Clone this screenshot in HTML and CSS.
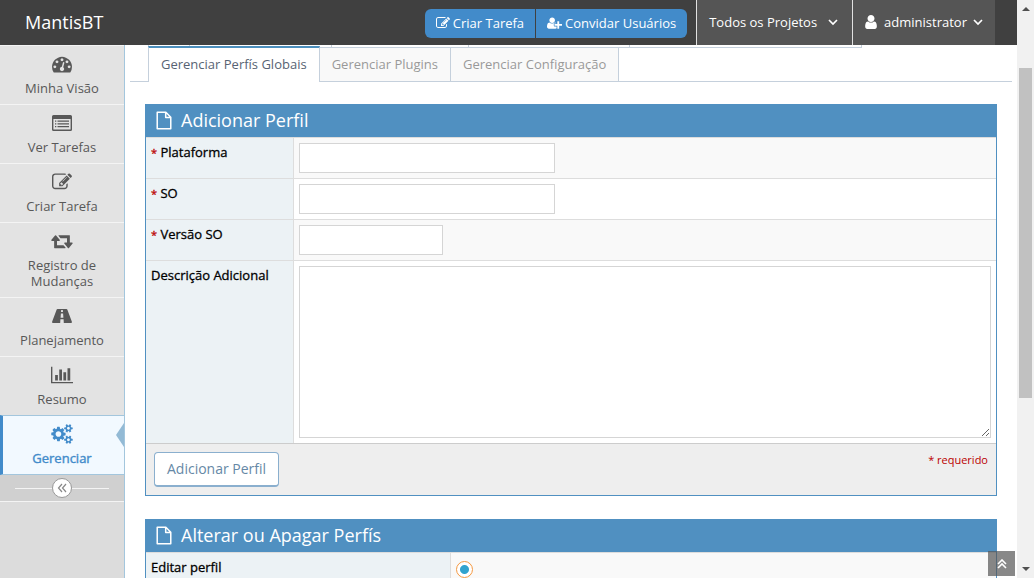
FILE: index.html
```html
<!DOCTYPE html>
<html lang="pt-BR">
<head>
<meta charset="utf-8">
<title>MantisBT</title>
<link rel="stylesheet" href="styles.css">
</head>
<body>
<svg class="sprite" aria-hidden="true">
  <symbol id="i-edit" viewBox="0 0 1792 1792"><path d="M888 1184l116-116-152-152-116 116v56h96v96h56zm440-720q-16-16-33 1l-350 350q-17 17-1 33t33-1l350-350q17-17 1-33zm80 594v190q0 119-84.5 203.5t-203.5 84.5h-832q-119 0-203.5-84.5t-84.5-203.5v-832q0-119 84.5-203.5t203.5-84.5h832q63 0 117 25 15 7 18 23 3 17-9 29l-49 49q-14 14-32 8-23-6-45-6h-832q-66 0-113 47t-47 113v832q0 66 47 113t113 47h832q66 0 113-47t47-113v-126q0-13 9-22l64-64q15-15 35-7t20 29zm-96-738l288 288-672 672h-288v-288zm444 132l-92 92-288-288 92-92q28-28 68-28t68 28l152 152q28 28 28 68t-28 68z"/></symbol>
  <symbol id="i-file" viewBox="0 0 17 20"><path fill="none" stroke="currentColor" stroke-width="1.6" stroke-linejoin="round" d="M1.3 1.3h9.2l5.2 5.2v12.2H1.3zM10.3 1.3v5.4h5.4"/></symbol>
  <symbol id="i-down" viewBox="0 0 10 10"><path fill="none" stroke="currentColor" stroke-width="1.7" d="M1 3l4 4 4-4"/></symbol>
</svg>
<div class="page">
  <div class="app">
    <header class="navbar">
      <a class="brand" href="#">MantisBT</a>
      <div class="actions">
        <a class="action" href="#"><svg class="icon-sm" aria-hidden="true"><use href="#i-edit"/></svg>Criar Tarefa</a>
        <a class="action" href="#"><svg class="icon-wide" viewBox="0 0 2048 1792" aria-hidden="true"><path d="M704 896q-159 0-271.5-112.5t-112.5-271.5 112.5-271.5 271.5-112.5 271.5 112.5 112.5 271.5-112.5 271.5-271.5 112.5zm960 128h352q13 0 22.5 9.5t9.5 22.5v192q0 13-9.5 22.5t-22.5 9.5h-352v352q0 13-9.5 22.5t-22.5 9.5h-192q-13 0-22.5-9.5t-9.5-22.5v-352h-352q-13 0-22.5-9.5t-9.5-22.5v-192q0-13 9.5-22.5t22.5-9.5h352v-352q0-13 9.5-22.5t22.5-9.5h192q13 0 22.5 9.5t9.5 22.5v352zm-736 224q0 52 38 90t90 38h256v238q-68 50-171 50h-874q-121 0-194-69t-73-190q0-53 3.5-103.5t14-109 26.5-108.5 43-97.5 62-81 85.5-53.5 111.5-20q19 0 39 17 79 61 154.5 91.5t164.5 30.5 164.5-30.5 154.5-91.5q20-17 39-17 132 0 217 96h-223q-52 0-90 38t-38 90v192z"/></svg>Convidar Usuários</a>
      </div>
      <button class="menu menu-project" type="button">Todos os Projetos<svg class="caret" aria-hidden="true"><use href="#i-down"/></svg></button>
      <button class="menu menu-user" type="button"><svg class="icon-user" viewBox="192 128 1408 1536" aria-hidden="true"><path d="M1536 1399q0 109-62.5 187t-150.5 78h-854q-88 0-150.5-78t-62.5-187q0-85 8.5-160.5t31.5-152 58.5-131 94-89 134.5-34.5q131 128 313 128t313-128q76 0 134.5 34.5t94 89 58.5 131 31.5 152 8.5 160.5zm-256-887q0 159-112.5 271.5t-271.5 112.5-271.5-112.5-112.5-271.5 112.5-271.5 271.5-112.5 271.5 112.5 112.5 271.5z"/></svg>administrator<svg class="caret" aria-hidden="true"><use href="#i-down"/></svg></button>
    </header>
    <div class="columns">
      <nav class="sidebar">
        <a class="side-link" href="#"><svg class="side-icon" viewBox="0 0 1792 1792" aria-hidden="true"><path d="M384 1152q0-53-37.5-90.5t-90.5-37.5-90.5 37.5-37.5 90.5 37.5 90.5 90.5 37.5 90.5-37.5 37.5-90.5zm192-448q0-53-37.5-90.5t-90.5-37.5-90.5 37.5-37.5 90.5 37.5 90.5 90.5 37.5 90.5-37.5 37.5-90.5zm428 481l101-382q6-26-7.5-48.5t-38.5-29.5-48 6.5-30 39.5l-101 382q-60 5-107 43.5t-63 98.5q-20 77 20 146t117 89 146-20 89-117q16-60-6-117t-72-91zm660-33q0-53-37.5-90.5t-90.5-37.5-90.5 37.5-37.5 90.5 37.5 90.5 90.5 37.5 90.5-37.5 37.5-90.5zm-640-640q0-53-37.5-90.5t-90.5-37.5-90.5 37.5-37.5 90.5 37.5 90.5 90.5 37.5 90.5-37.5 37.5-90.5zm448 192q0-53-37.5-90.5t-90.5-37.5-90.5 37.5-37.5 90.5 37.5 90.5 90.5 37.5 90.5-37.5 37.5-90.5zm320 448q0 261-141 483-19 29-54 29h-1402q-35 0-54-29-141-221-141-483 0-182 71-348t191-286 286-191 348-71 348 71 286 191 191 286 71 348z"/></svg>Minha Visão</a>
        <a class="side-link" href="#"><svg class="side-icon" viewBox="0 0 20 20" aria-hidden="true"><path fill-rule="evenodd" d="M1.500 2h17A1.500 1.500 0 0 1 20 3.500v13a1.500 1.500 0 0 1-1.500 1.500h-17A1.500 1.500 0 0 1 0 16.500v-13A1.500 1.500 0 0 1 1.500 2zM1.400 6v10.200q0 .4.400.4h16.400q.4 0 .4-.4V6zM3 7.400h1.300v1.300H3zM5.500 7.400H17v1.300H5.500zM3 10.200h1.300v1.300H3zM5.500 10.200H17v1.300H5.500zM3 13h1.300v1.300H3zM5.500 13H17v1.300H5.500z"/></svg>Ver Tarefas</a>
        <a class="side-link" href="#"><svg class="side-icon" aria-hidden="true"><use href="#i-edit"/></svg>Criar Tarefa</a>
        <a class="side-link" href="#"><svg class="side-icon" viewBox="-64 0 1920 1792" aria-hidden="true"><path d="M1216 1504q0 13-9.500 22.500t-22.500 9.500h-960q-8 0-13.500-2t-9-7-5.500-8-3-11.500-1-11.500v-600h-192q-26 0-45-19t-19-45q0-24 15-41l320-384q19-22 49-22t49 22l320 384q15 17 15 41 0 26-19 45t-45 19h-192v384h576q16 0 25 11l160 192q7 10 7 21zm640-416q0 24-15 41l-320 384q-20 23-49 23t-49-23l-320-384q-15-17-15-41 0-26 19-45t45-19h192v-384h-576q-16 0-25-12l-160-192q-7-9-7-20 0-13 9.500-22.500t22.500-9.500h960q8 0 13.500 2t9 7 5.500 8 3 11.500 1 11.500v600h192q26 0 45 19t19 45z"/></svg>Registro de Mudanças</a>
        <a class="side-link" href="#"><svg class="side-icon" viewBox="0 0 20 20" aria-hidden="true"><path fill-rule="evenodd" d="M5.500 3h9q.6 0 .8.600l4.600 12.200q.3 1.200-.9 1.200H1q-1.200 0-.9-1.200L4.700 3.600q.2-.6.800-.6zM9.200 3.900L9 6h2l-.2-2.100zM8.900 7.400l-.3 4.300h2.800l-.3-4.300zM8.400 13.300L8.200 17h3.600l-.2-3.700z"/></svg>Planejamento</a>
        <a class="side-link" href="#"><svg class="side-icon" viewBox="0 0 2048 1792" aria-hidden="true"><path d="M640 896v512h-256v-512h256zm384-512v1024h-256v-1024h256zm1024 1152v128h-2048v-1536h128v1408h1920zm-640-896v768h-256v-768h256zm384-384v1152h-256v-1152h256z"/></svg>Resumo</a>
        <a class="side-link side-active" href="#"><svg class="side-icon" viewBox="0 0 1920 1792" aria-hidden="true"><path d="M896 896q0-106-75-181t-181-75-181 75-75 181 75 181 181 75 181-75 75-181zm768 512q0-52-38-90t-90-38-90 38-38 90q0 53 37.500 90.500t90.500 37.500 90.500-37.500 37.500-90.500zm0-1024q0-52-38-90t-90-38-90 38-38 90q0 53 37.500 90.500t90.500 37.500 90.500-37.500 37.500-90.500zm-384 421v185q0 10-7 19.500t-16 10.500l-155 24q-11 35-32 76 34 48 90 115 7 11 7 20 0 12-7 19-23 30-82.500 89.500t-78.500 59.500q-11 0-21-7l-115-90q-37 19-77 31-11 108-23 155-7 24-30 24h-186q-11 0-20-7.500t-10-17.500l-23-153q-34-10-75-31l-118 89q-7 7-20 7-11 0-21-8-144-133-144-160 0-9 7-19 10-14 41-53t47-61q-23-44-35-82l-152-24q-10-1-17-9.500t-7-19.500v-185q0-10 7-19.500t16-10.500l155-24q11-35 32-76-34-48-90-115-7-11-7-20 0-12 7-20 22-30 82-89t79-59q11 0 21 7l115 90q34-18 77-32 11-108 23-154 7-24 30-24h186q11 0 20 7.500t10 17.500l23 153q34 10 75 31l118-89q8-7 20-7 11 0 21 8 144 133 144 160 0 9-7 19-12 16-42 54t-45 60q23 48 34 82l152 23q10 2 17 10.500t7 19.500zm640 533v140q0 16-149 31-12 27-30 52 51 113 51 138 0 4-4 7-122 71-124 71-8 0-46-47t-52-68q-20 2-30 2t-30-2q-14 21-52 68t-46 47q-2 0-124-71-4-3-4-7 0-25 51-138-18-25-30-52-149-15-149-31v-140q0-16 149-31 13-29 30-52-51-113-51-138 0-4 4-7 4-2 35-20t59-34 30-16q8 0 46 46.500t52 67.500q20-2 30-2t30 2q51-71 92-112l6-2q4 0 124 70 4 3 4 7 0 25-51 138 17 23 30 52 149 15 149 31zm0-1024v140q0 16-149 31-12 27-30 52 51 113 51 138 0 4-4 7-122 71-124 71-8 0-46-47t-52-68q-20 2-30 2t-30-2q-14 21-52 68t-46 47q-2 0-124-71-4-3-4-7 0-25 51-138-18-25-30-52-149-15-149-31v-140q0-16 149-31 13-29 30-52-51-113-51-138 0-4 4-7 4-2 35-20t59-34 30-16q8 0 46 46.500t52 67.500q20-2 30-2t30 2q51-71 92-112l6-2q4 0 124 70 4 3 4 7 0 25-51 138 17 23 30 52 149 15 149 31z"/></svg>Gerenciar</a>
        <div class="collapse"><button class="collapse-btn" type="button" aria-label="Recolher menu"><svg viewBox="0 0 10 10" aria-hidden="true"><path fill="none" stroke="currentColor" stroke-width="1.200" d="M5 1L1.500 5 5 9M9 1L5.500 5 9 9"/></svg></button></div>
      </nav>
      <main class="content">
        <div class="tabs-upper" aria-hidden="true"><span class="w1"></span><span class="w2"></span><span class="w3"></span><span class="w4"></span><span class="w5"></span></div>
        <ul class="tabs">
          <li><a class="tab tab-active" href="#">Gerenciar Perfís Globais</a></li>
          <li><a class="tab" href="#">Gerenciar Plugins</a></li>
          <li><a class="tab" href="#">Gerenciar Configuração</a></li>
        </ul>
        <form class="widget">
          <h4 class="widget-title"><svg class="title-icon" aria-hidden="true"><use href="#i-file"/></svg>Adicionar Perfil</h4>
          <table class="fields">
            <tr><th scope="row"><span class="required">*</span> <label for="platform">Plataforma</label></th><td><input class="text" id="platform" type="text"></td></tr>
            <tr><th scope="row"><span class="required">*</span> <label for="os">SO</label></th><td><input class="text" id="os" type="text"></td></tr>
            <tr><th scope="row"><span class="required">*</span> <label for="version">Versão SO</label></th><td><input class="text text-short" id="version" type="text"></td></tr>
            <tr><th scope="row"><label for="description">Descrição Adicional</label></th><td><textarea class="text area" id="description"></textarea></td></tr>
          </table>
          <div class="widget-foot">
            <button class="submit" type="button">Adicionar Perfil</button>
            <span class="required-note">* requerido</span>
          </div>
        </form>
        <form class="widget">
          <h4 class="widget-title"><svg class="title-icon" aria-hidden="true"><use href="#i-file"/></svg>Alterar ou Apagar Perfís</h4>
          <table class="fields fields-wide">
            <tr><th scope="row"><label for="edit">Editar perfil</label></th><td><input class="radio" id="edit" name="action" type="radio" checked></td></tr>
          </table>
        </form>
      </main>
    </div>
    <button class="to-top" type="button" aria-label="Voltar ao topo"><svg viewBox="0 0 10 10" aria-hidden="true"><path fill="none" stroke="currentColor" stroke-width="1.600" d="M1 5l4-4 4 4M1 9l4-4 4 4"/></svg></button>
  </div>
  <div class="scrollbar" aria-hidden="true">
    <span class="arrow arrow-up"></span>
    <span class="thumb"></span>
    <span class="arrow arrow-down"></span>
  </div>
</div>
</body>
</html>
```

FILE: styles.css
```css
* { box-sizing: border-box; }
body {
  margin: 0;
  font: 13px/20px "Open Sans", sans-serif;
  color: #393939;
  background: #fff;
}
a { color: inherit; text-decoration: none; }
button, input, textarea { font: inherit; }
svg { fill: currentColor; }
.sprite { display: none; }

.page { display: flex; height: 100vh; overflow: hidden; }
.app {
  position: relative;
  flex: 1;
  min-width: 0;
  display: flex;
  flex-direction: column;
}

/* Top bar */
.navbar {
  display: flex;
  flex: none;
  height: 45px;
  padding-right: 22px;
  background: #404040;
  color: #fff;
}
.brand { margin-right: auto; padding-left: 25px; font-size: 18px; line-height: 44px; }
.actions { display: flex; gap: 1px; margin: 9px 9px 7px 0; }
.action {
  display: flex;
  align-items: center;
  gap: 3px;
  padding: 0 11px 2px;
  background: #428bca;
}
.action:first-child { border-radius: 6px 0 0 6px; }
.action:last-child { border-radius: 0 6px 6px 0; }
.icon-sm { width: 14px; height: 14px; }
.icon-wide { width: 15px; height: 14px; }
.menu {
  display: flex;
  align-items: center;
  border: 0;
  border-left: 1px solid #e1e1e1;
  background: #555;
  color: #fff;
}
.menu-project { padding: 0 14px 2px 12px; gap: 11px; }
.menu-user { padding: 0 12px 2px 11px; gap: 6px; }
.icon-user { width: 14px; height: 14px; }
.caret { width: 10px; height: 10px; }

/* Sidebar */
.columns { display: flex; flex: 1; min-height: 0; }
.sidebar {
  flex: none;
  width: 125px;
  border-right: 1px solid #a3c6dd;
  background: #dcdcdc;
}
.side-link {
  display: block;
  padding: 8px 16px;
  border-top: 1px solid #f4f4f4;
  background: #e3e3e3;
  color: #585858;
  line-height: 16px;
  text-align: center;
}
.side-icon { display: block; width: 22px; height: 20px; margin: 0 auto 6px; }
.side-active {
  position: relative;
  padding-left: 13px;
  border: solid #a3c6dd;
  border-width: 1px 0;
  border-left: 3px solid #428bca;
  background: #f2f9ff;
  color: #428bca;
  -webkit-text-stroke: 0.4px #428bca;
}
.side-active::after {
  content: "";
  position: absolute;
  right: 0;
  top: 7px;
  border: solid transparent;
  border-width: 12px 8px 12px 0;
  border-right-color: #93bad5;
}
.collapse {
  display: flex;
  align-items: center;
  height: 27px;
  padding: 0 15px;
  border-bottom: 1px solid #f4f4f4;
  background: #d0d0d0;
}
.collapse::before, .collapse::after { content: ""; flex: 1; height: 1px; background: #f4f4f4; }
.collapse-btn {
  display: grid;
  place-items: center;
  width: 20px;
  height: 20px;
  padding: 0;
  border: 1px solid #999;
  border-radius: 50%;
  background: #fff;
  color: #888;
}
.collapse-btn svg { width: 10px; height: 10px; }

/* Tabs */
.content { flex: 1; min-width: 0; padding: 0 5px; overflow: hidden; }
.tabs-upper { display: flex; height: 3px; padding-left: 18px; }
.tabs-upper span { border: solid #c5d0dc; border-width: 0 1px 1px 0; }
.tabs-upper .w1 { width: 42px; border-left-width: 1px; }
.tabs-upper .w2 { width: 142px; }
.tabs-upper .w3 { width: 137px; }
.tabs-upper .w4 { width: 161px; }
.tabs-upper .w5 { width: 232px; }
.tabs {
  display: flex;
  align-items: flex-end;
  margin: -2px 0 22px;
  padding: 0 0 0 18px;
  border-bottom: 1px solid #c5d0dc;
  list-style: none;
}
.tab {
  display: block;
  padding: 6px 12px 7px;
  border-right: 1px solid #c5d0dc;
  background: #f9f9f9;
  color: #999;
}
.tab-active {
  margin-bottom: -1px;
  padding-top: 6px;
  border: solid #c5d0dc;
  border-width: 2px 1px 0;
  border-top-color: #4c8fbd;
  padding-bottom: 8px;
  background: #fff;
  color: #576373;
}

/* Widgets */
.widget { margin: 0 15px 23px; border: 1px solid #5090c1; border-top: 0; }
.widget-title {
  display: flex;
  align-items: center;
  gap: 9px;
  margin: 0 -1px;
  padding: 0 11px;
  background: #5090c1;
  color: #fff;
  font-size: 18px;
  font-weight: 400;
  line-height: 33px;
}
.title-icon { width: 16px; height: 19px; }
.fields { width: 100%; border-spacing: 0; table-layout: fixed; }
.fields th, .fields td { padding: 5px; border-top: 1px solid #ddd; vertical-align: top; }
.fields th {
  width: 148px;
  border-right: 1px solid #ddd;
  background: #ecf2f5;
  color: #000;
  font-weight: 400;
  line-height: 18px;
  text-align: left;
  -webkit-text-stroke: 0.3px #000;
}
.fields-wide th { width: 305px; }
.fields tr:nth-child(odd) td { background: #f9f9f9; }
.required { color: #b00; font-size: 11px; -webkit-text-stroke: 0.3px #b00; }
.text {
  display: block;
  width: 256px;
  max-width: 100%;
  height: 30px;
  padding: 4px 6px;
  border: 1px solid #d5d5d5;
  background: #fff;
}
.text-short { width: 144px; }
.area { width: 100%; height: 172px; }
.widget-foot {
  display: flex;
  justify-content: space-between;
  align-items: flex-start;
  padding: 8px;
  border-top: 1px solid #ccc;
  background: #eee;
}
.submit {
  height: 35px;
  padding: 0 12px;
  border: 1px solid #8aafce;
  border-bottom-width: 2px;
  border-radius: 4px;
  background: #fff;
  color: #6688a6;
  font-size: 14px;
}
.required-note { color: #b00; font-size: 11px; line-height: 16px; }
.radio {
  display: block;
  appearance: none;
  width: 17px;
  height: 17px;
  margin: 3px 0 0;
  border: 1px solid #f59942;
  border-radius: 50%;
  background: radial-gradient(circle, #32a3ce 4px, #fff 5px);
}

.to-top {
  position: absolute;
  right: 2px;
  bottom: 2px;
  display: grid;
  place-items: center;
  width: 27px;
  height: 25px;
  padding: 0;
  border: 0;
  background: rgba(85, 85, 85, 0.7);
  color: #fff;
}
.to-top svg { width: 10px; height: 10px; }

/* Scrollbar */
.scrollbar {
  display: flex;
  flex-direction: column;
  align-items: center;
  width: 17px;
  padding: 7px 0;
  background: #f1f1f1;
}
.arrow { border: 4px solid transparent; }
.arrow-up { border-top: 0; border-bottom-color: #505050; }
.arrow-down { margin-top: auto; border-bottom: 0; border-top-color: #505050; }
.thumb { width: 13px; height: 330px; margin-top: 57px; background: #c1c1c1; }
```
